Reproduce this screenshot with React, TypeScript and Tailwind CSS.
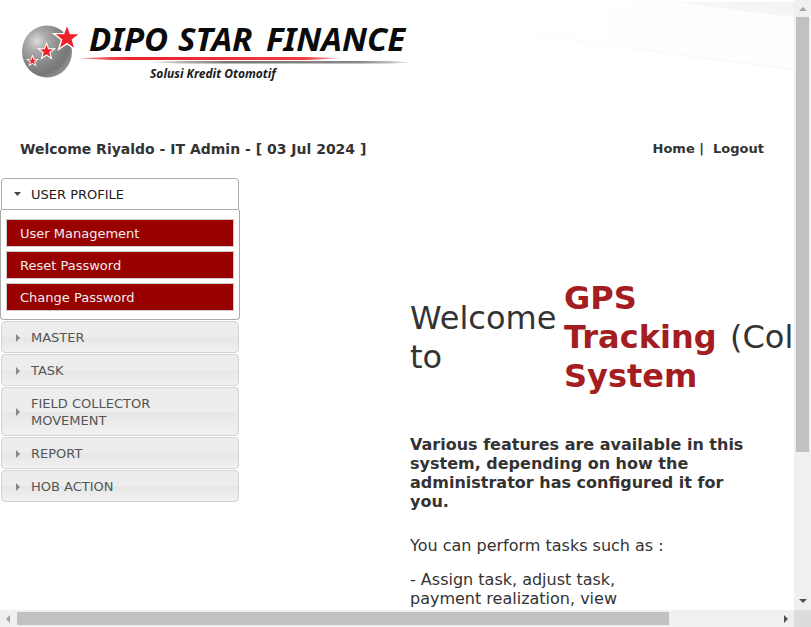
import React from "react";

const STAR = "M0 -10 L2.4 -3.2 L9.6 -3.1 L3.9 1.2 L6 8.2 L0 4.1 L-6 8.2 L-3.9 1.2 L-9.6 -3.1 L-2.4 -3.2 Z";

function Logo() {
  return (
    <svg className="block h-24 w-[420px] max-w-none" viewBox="0 0 420 96" role="img" aria-label="Dipo Star Finance">
      <defs>
        <radialGradient id="ball" cx="0.3" cy="0.3" r="0.75">
          <stop offset="0" stopColor="#dedede" />
          <stop offset="0.25" stopColor="#acacac" />
          <stop offset="0.6" stopColor="#888" />
          <stop offset="0.85" stopColor="#777" />
          <stop offset="1" stopColor="#8c8c8c" />
        </radialGradient>
        <linearGradient id="redLine" x1="0" x2="1">
          <stop offset="0" stopColor="#ee2a2f" stopOpacity="0.6" />
          <stop offset="0.2" stopColor="#e8242a" />
          <stop offset="0.85" stopColor="#ee3a40" />
          <stop offset="1" stopColor="#ee3a40" stopOpacity="0.4" />
        </linearGradient>
        <linearGradient id="grayLine" x1="0" x2="1">
          <stop offset="0" stopColor="#777" stopOpacity="0.2" />
          <stop offset="0.3" stopColor="#777" />
          <stop offset="0.8" stopColor="#888" />
          <stop offset="1" stopColor="#888" stopOpacity="0.2" />
        </linearGradient>
      </defs>
      <ellipse cx="47" cy="51.5" rx="25" ry="26" fill="url(#ball)" />
      <g fill="#ee2027" stroke="#fff" paintOrder="stroke">
        <path d={STAR} transform="translate(67 38) scale(1.180)" strokeWidth="2.400" />
        <path d={STAR} transform="translate(46.500 51.500) scale(.68)" strokeWidth="3.200" />
        <path d={STAR} transform="translate(32.500 61) scale(.42)" strokeWidth="4" />
      </g>
      <g fontFamily="Noto Sans, sans-serif" fontSize="33" fontWeight="700" fontStyle="italic" fill="#0b0b0b">
        <text x="89" y="51">DIPO</text>
        <text x="178" y="51">STAR</text>
        <text x="266" y="51">FINANCE</text>
      </g>
      <path d="M79 58.300 L110 57 L310 57 L341 58.300 L310 60 L110 60 Z" fill="url(#redLine)" />
      <path d="M148 62 L180 61 L390 61 L412 62.500 L390 63.500 L180 63.500 Z" fill="url(#grayLine)" />
      <text x="150" y="78" fontFamily="Noto Sans, sans-serif" fontSize="12" fontWeight="700" fontStyle="italic" fill="#1c1c1c">Solusi Kredit Otomotif</text>
    </svg>
  );
}

function Header() {
  return (
    <header className="relative h-[130px]">
      <svg className="absolute top-0 right-0 h-[72px] w-[400px]" viewBox="0 0 400 72" aria-hidden="true">
        <defs>
          <linearGradient id="sweep" x1="0" x2="1">
            <stop offset="0" stopColor="#fff" />
            <stop offset="1" stopColor="#fcfefe" />
          </linearGradient>
          <linearGradient id="edge" x1="0" x2="1">
            <stop offset="0" stopColor="#fff" />
            <stop offset="1" stopColor="#f6f7f8" />
          </linearGradient>
        </defs>
        <path d="M0 2 H400 V69 L0 16 Z" fill="url(#sweep)" />
        <path d="M0 16 L160 37 L400 69 V70.500 L160 38.500 L0 17 Z" fill="url(#edge)" />
        <path d="M284 2 H400 V17 Q350 12 284 2 Z" fill="#f5f6f8" />
        <path d="M330 2 H400 V11 Z" fill="#f2f3f5" />
      </svg>
      <div className="relative">
        <Logo />
      </div>
    </header>
  );
}

const profileItems = ["User Management", "Reset Password", "Change Password"];
const sections = ["MASTER", "TASK", "FIELD COLLECTOR MOVEMENT", "REPORT", "HOB ACTION"];

function Sidebar() {
  return (
    <nav className="w-60 shrink-0 text-[13px] leading-[17px]">
      <button className="mx-px flex h-8 w-[238px] items-center rounded-t border border-[#aaa] bg-white pl-3 text-left text-[#212121]">
        <svg className="mr-[9px] h-4 w-2" viewBox="0 0 8 16" aria-hidden="true">
          <path d="M0 6 H7 L3.500 10 Z" fill="#454545" />
        </svg>
        USER PROFILE
      </button>
      <ul className="mb-px flex flex-col gap-1 rounded-b border border-t-0 border-[#aaa] px-[5px] pt-[9px] pb-2">
        {profileItems.map((item) => (
          <li key={item}>
            <a href="#" className="flex h-7 items-center border border-[#ccc] bg-[#990000] pl-[13px] text-[#eee]">
              {item}
            </a>
          </li>
        ))}
      </ul>
      <div className="mx-px flex flex-col gap-px">
        {sections.map((name) => (
          <button
            key={name}
            className="flex items-center rounded border border-[#d3d3d3] bg-linear-to-b from-[#ededed] from-50% via-[#e6e6e6] via-50% to-[#f1f1f1] pt-[7px] pr-12 pb-1.5 pl-3 text-left text-[#555]"
          >
            <svg className="mr-[9px] h-4 w-2 shrink-0" viewBox="0 0 8 16" aria-hidden="true">
              <path d="M2 4 V12 L6 8 Z" fill="#888" />
            </svg>
            {name}
          </button>
        ))}
      </div>
    </nav>
  );
}

function Intro() {
  return (
    <main className="ml-[170px] min-w-0 flex-1 pt-[101px] text-base leading-[19px]">
      <h1 className="flex items-center gap-[10px] text-[32px] leading-[39px]">
        <span className="w-36 shrink-0">Welcome to</span>
        <strong className="w-[156px] shrink-0 text-[#a31d21]">GPS Tracking System</strong>
        <span className="whitespace-nowrap">(Col</span>
      </h1>
      <p className="mt-[39px] w-[346px] font-bold">
        Various features are available in this system, depending on how the administrator has configured it for you.
      </p>
      <p className="mt-[25px]">You can perform tasks such as :</p>
      <p className="mt-[15px] w-[230px]">- Assign task, adjust task, payment realization, view</p>
    </main>
  );
}

function VerticalBar() {
  return (
    <div className="flex flex-col items-center bg-[#f0f0f0]">
      <button aria-label="Scroll up" className="flex h-[17px] w-full items-center justify-center">
        <svg className="h-2 w-2" viewBox="0 0 8 8" aria-hidden="true"><path d="M0 6 L4 2 L8 6 Z" fill="#a3a3a3" /></svg>
      </button>
      <div className="flex w-[13px] flex-1 flex-col">
        <div className="basis-[75.5%] bg-[#c1c1c1]" />
      </div>
      <button aria-label="Scroll down" className="flex h-[17px] w-full items-center justify-center">
        <svg className="h-2 w-2" viewBox="0 0 8 8" aria-hidden="true"><path d="M0 1 H8 L4 5 Z" fill="#505050" /></svg>
      </button>
    </div>
  );
}

function HorizontalBar() {
  return (
    <div className="flex items-center bg-[#f0f0f0]">
      <button aria-label="Scroll left" className="flex h-[17px] w-[17px] items-center justify-center">
        <svg className="h-2 w-2" viewBox="0 0 8 8" aria-hidden="true"><path d="M5 0 V8 L1 4 Z" fill="#a3a3a3" /></svg>
      </button>
      <div className="flex h-[13px] flex-1">
        <div className="basis-[85.8%] bg-[#c1c1c1]" />
      </div>
      <button aria-label="Scroll right" className="flex h-[17px] w-[17px] items-center justify-center">
        <svg className="h-2 w-2" viewBox="0 0 8 8" aria-hidden="true"><path d="M2 0 V8 L6 4 Z" fill="#505050" /></svg>
      </button>
    </div>
  );
}

export default function App() {
  return (
    <div className="grid h-screen grid-cols-[minmax(0,1fr)_17px] grid-rows-[minmax(0,1fr)_17px] bg-white font-['Verdana','DejaVu_Sans',sans-serif] text-[#333]">
      <div className="overflow-hidden">
        <Header />
        <div className="flex h-12 items-start justify-between pt-[9px] pr-[30px] pl-5 font-bold">
          <p className="text-sm leading-5">Welcome Riyaldo - IT Admin - [ 03 Jul 2024 ]</p>
          <p className="text-[13px] leading-5 whitespace-pre">
            <a href="#">Home</a> |{"  "}
            <a href="#">Logout</a>
          </p>
        </div>
        <div className="flex items-start">
          <Sidebar />
          <Intro />
        </div>
      </div>
      <VerticalBar />
      <HorizontalBar />
      <div className="bg-[#dcdcdc]" />
    </div>
  );
}
